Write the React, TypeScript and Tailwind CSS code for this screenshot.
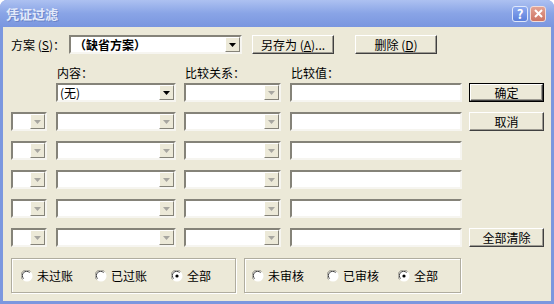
import React from "react";

const font = { fontFamily: '"Noto Sans CJK SC", "Liberation Sans", sans-serif' };

const Arrow = ({ on }: { on?: boolean }) => (
  <svg width="7" height="4" viewBox="0 0 7 4">
    <path d="M0 0h7L3.5 4z" fill={on ? "#000" : "#a7a6a0"} />
  </svg>
);

const Combo = ({ cls, on, children }: { cls: string; on?: boolean; children?: React.ReactNode }) => (
  <div className={`flex h-[19px] bg-white border-2 border-t-[#858379] border-l-[#858379] border-b-[#f6f5f0] border-r-[#f6f5f0] ${cls}`}>
    <div className="flex-1 flex items-center pl-[2px] text-[12px] leading-none text-black overflow-hidden whitespace-nowrap">
      {children}
    </div>
    <div className="w-[15px] h-full flex items-center justify-center bg-[#ece9d8] border border-t-white border-l-white border-b-[#858379] border-r-[#858379]">
      <Arrow on={on} />
    </div>
  </div>
);

const Field = ({ cls }: { cls: string }) => (
  <div className={`h-[19px] bg-white border-2 border-t-[#858379] border-l-[#858379] border-b-[#f6f5f0] border-r-[#f6f5f0] ${cls}`} />
);

const Btn = ({ cls, def, children }: { cls: string; def?: boolean; children: React.ReactNode }) => (
  <div className={`${cls} ${def ? "border border-black" : ""}`}>
    <div className="h-full flex items-center justify-center text-[12px] leading-none text-black bg-[#ece9d8] border border-t-white border-l-white border-b-[#404040] border-r-[#404040] shadow-[inset_-1px_-1px_0_#9d9b92]">
      {children}
    </div>
  </div>
);

const Radio = ({ cls, on, label }: { cls: string; on?: boolean; label: string }) => (
  <div className={`flex items-center gap-[4px] ${cls}`}>
    <svg width="12" height="12" viewBox="0 0 12 12">
      <circle cx="6" cy="6" r="5.5" fill="#fff" />
      <path d="M1.6 9.5A5.5 5.5 0 0 1 9.5 1.6" stroke="#8c8a82" strokeWidth="1" fill="none" />
      <path d="M2.6 8.6A4.2 4.2 0 0 1 8.6 2.6" stroke="#404040" strokeWidth="1" fill="none" />
      {on && <circle cx="6" cy="6" r="1.6" fill="#000" />}
    </svg>
    <span className="text-[12px] leading-none text-black">{label}</span>
  </div>
);

export default function App() {
  const rows = [0, 1, 2, 3, 4, 5];
  return (
    <div className="w-[554px] h-[304px] bg-white" style={font}>
      <div className="w-[554px] h-[304px] flex flex-col bg-[#7b97df] rounded-t-[7px] overflow-hidden">
        {/* title bar */}
        <div className="h-[27px] flex items-center pl-[6px] pr-[8px] bg-gradient-to-b from-[#adc1f1] via-[#89a4e6] to-[#7a96df]">
          <span className="text-[13px] font-bold text-[#e3eafa] [text-shadow:1px_1px_0_#6a84c8]">凭证过滤</span>
          <div className="ml-auto flex gap-[2px]">
            <div className="w-[16px] h-[16px] rounded-[3px] bg-gradient-to-b from-[#8eaaf0] to-[#5b7fdb] border border-[#dfe7fa] flex items-center justify-center text-white text-[13px] font-bold leading-none">
              ?
            </div>
            <div className="w-[16px] h-[16px] rounded-[3px] bg-gradient-to-b from-[#e3a394] to-[#cd7463] border border-[#f2dcd7] flex items-center justify-center">
              <svg width="9" height="9" viewBox="0 0 9 9">
                <path d="M1 1l7 7M8 1l-7 7" stroke="#fff" strokeWidth="2" />
              </svg>
            </div>
          </div>
        </div>

        {/* body */}
        <div className="flex-1 mx-[3px] mb-[3px] bg-[#ece9d8] flex flex-col pl-[8px]">
          {/* scheme row */}
          <div className="flex items-center h-[19px] mt-[8px]">
            <span className="w-[58px] text-[12px] leading-none text-black whitespace-nowrap">
              方案 (<u>S</u>)：
            </span>
            <Combo cls="w-[173px]" on>
              <span className="font-bold pl-[1px]">（缺省方案）</span>
            </Combo>
            <Btn cls="w-[82px] h-[19px] ml-[10px]">
              另存为 (<u>A</u>)...
            </Btn>
            <Btn cls="w-[82px] h-[19px] ml-[21px]">
              删除 (<u>D</u>)
            </Btn>
          </div>

          {/* headers */}
          <div className="h-[29px] flex items-end pb-[4px] text-[12px] leading-none text-black">
            <span className="w-[36px]" />
            <span className="w-[120px] ml-[9px] pl-[1px]">内容：</span>
            <span className="w-[97px] ml-[8px] pl-[1px]">比较关系：</span>
            <span className="w-[172px] ml-[9px] pl-[1px]">比较值：</span>
          </div>

          {/* condition rows */}
          <div className="flex flex-col gap-[10px]">
            {rows.map((r) => (
              <div key={r} className="flex h-[19px]">
                {r === 0 ? <div className="w-[36px]" /> : <Combo cls="w-[36px]" />}
                <Combo cls="w-[120px] ml-[9px]" on={r === 0}>
                  {r === 0 ? "(无)" : null}
                </Combo>
                <Combo cls="w-[97px] ml-[8px]" />
                <Field cls="w-[172px] ml-[9px]" />
                {r === 0 && (
                  <Btn cls="w-[75px] h-[19px] ml-[7px]" def>
                    确定
                  </Btn>
                )}
                {r === 1 && <Btn cls="w-[75px] h-[19px] ml-[7px]">取消</Btn>}
                {r === 5 && <Btn cls="w-[75px] h-[19px] ml-[7px]">全部清除</Btn>}
              </div>
            ))}
          </div>

          {/* status groups */}
          <div className="flex mt-[11px]">
            <div className="w-[225px] h-[35px] flex items-center pl-[9px] border border-[#b0ad9f] shadow-[inset_1px_1px_0_#fff,1px_1px_0_#fff]">
              <Radio cls="w-[74px]" label="未过账" />
              <Radio cls="w-[76px]" label="已过账" />
              <Radio cls="" on label="全部" />
            </div>
            <div className="w-[217px] h-[35px] ml-[8px] flex items-center pl-[7px] border border-[#b0ad9f] shadow-[inset_1px_1px_0_#fff,1px_1px_0_#fff]">
              <Radio cls="w-[75px]" label="未审核" />
              <Radio cls="w-[71px]" label="已审核" />
              <Radio cls="" on label="全部" />
            </div>
          </div>
        </div>
      </div>
    </div>
  );
}
